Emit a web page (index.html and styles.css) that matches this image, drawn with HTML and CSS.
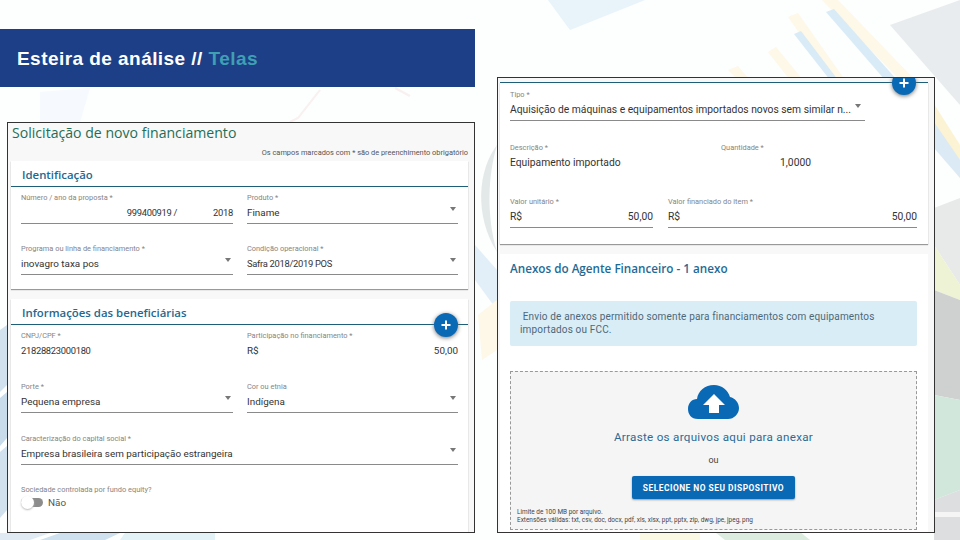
FILE: index.html
```html
<!DOCTYPE html>
<html lang="pt-BR">
<head>
    <meta charset="UTF-8">
    <title>Esteira de análise // Telas</title>
    <link rel="stylesheet" href="styles.css">
</head>
<body>
    <svg class="backdrop" viewBox="0 0 960 540" aria-hidden="true">
        <!-- charts and bands of the slide background -->
        <polygon points="548,0 570,30 645,0" fill="#e9f3fa"/>
        <polygon points="822,0 838,0 915,80 900,80" fill="#fdf8e8"/>
        <polygon points="826,12 834,9 897,80 885,80" fill="#d9ebf6"/>
        <polygon points="788,17 798,13 845,80 832,80" fill="#fdf8e8"/>
        <polygon points="794,34 801,31 838,80 830,80" fill="#d9ebf6"/>
        <polygon points="768,52 776,47 803,80 790,80" fill="#fdf8e8"/>
        <polygon points="728,70 738,66 750,80 738,80" fill="#fdf8e8"/>
        <polygon points="890,25 960,0 960,105" fill="#e9ecee"/>
        <polygon points="934,104 960,145 960,178 934,138" fill="#fbf3d3"/>
        <polygon points="934,122 960,160 960,178 934,148" fill="#dbeaf4"/>
        <polygon points="934,208 960,198 960,285 934,245" fill="#e8eaea"/>
        <polygon points="934,245 960,285 960,300 934,290" fill="#eef3d6"/>
        <polygon points="934,290 960,300 960,400 934,395" fill="#cfd1d1"/>
        <polygon points="934,395 960,400 960,490 934,500" fill="#d2e7db"/>
        <polygon points="934,500 960,490 960,540 934,540" fill="#dcdedf"/>
        <rect x="934" y="512" width="26" height="5" fill="#f5f5f5"/>
        <path d="M497 145 C478 170 474 215 497 252 C486 215 488 175 497 145 Z" fill="#e2e9e8"/>
        <polygon points="475,245 497,270 497,310 475,280" fill="#e3eff8"/>
        <polygon points="478,315 497,300 497,350 482,360" fill="#fdf8e8"/>
        <polygon points="0,330 7,325 7,385 0,392" fill="#d2e1ee"/>
        <polygon points="0,398 7,392 7,438 0,446" fill="#c8dbea"/>
        <polygon points="0,452 7,446 7,510 0,518" fill="#d2e1ee"/>
        <polygon points="0,533 50,533 30,540 0,540" fill="#e0eaf3"/>
        <polygon points="60,533 120,533 105,540 40,540" fill="#cfe0ee"/>
        <polygon points="125,533 215,533 215,540 120,540" fill="#e2f2f6"/>
        <polygon points="640,532 700,532 700,540 640,540" fill="#fbf9e4"/>
        <polygon points="715,532 800,532 810,540 725,540" fill="#dcecdf"/>
        <polygon points="40,92 90,88 80,122 40,122" fill="#f6f9fd"/>
        <path d="M320 90 L298 118 L290 122 M395 88 L410 96" stroke="#f9f0f0" stroke-width="2" fill="none"/>
    </svg>

    <div class="col-left">
        <h1 class="banner">Esteira de análise // <span class="banner-accent">Telas</span></h1>

        <div class="panel panel-left">
            <h2 class="page-title">Solicitação de novo financiamento</h2>
            <p class="required-note">Os campos marcados com * são de preenchimento obrigatório</p>

            <section class="card card-ident">
                <h3 class="card-head">Identificação</h3>
                <div class="form-grid">
                    <div class="field">
                        <label>Número / ano da proposta *</label>
                        <div class="control num"><span class="push-right">999400919 /</span><span class="year">2018</span></div>
                    </div>
                    <div class="field">
                        <label>Produto *</label>
                        <div class="control">Finame<i class="caret"></i></div>
                    </div>
                    <div class="field">
                        <label>Programa ou linha de financiamento *</label>
                        <div class="control">inovagro taxa pos<i class="caret"></i></div>
                    </div>
                    <div class="field">
                        <label>Condição operacional *</label>
                        <div class="control num">Safra 2018/2019 POS<i class="caret"></i></div>
                    </div>
                </div>
            </section>

            <section class="card card-benef">
                <h3 class="card-head">Informações das beneficiárias</h3>
                <button class="fab fab-benef" aria-label="Adicionar">
                    <svg viewBox="0 0 10 10"><path d="M5 0.5V9.5M0.5 5H9.5"/></svg>
                </button>
                <div class="form-grid">
                    <div class="field">
                        <label>CNPJ/CPF *</label>
                        <div class="control no-line num">21828823000180</div>
                    </div>
                    <div class="field">
                        <label>Participação no financiamento *</label>
                        <div class="control no-line">R$<span>50,00</span></div>
                    </div>
                    <div class="field">
                        <label>Porte *</label>
                        <div class="control">Pequena empresa<i class="caret"></i></div>
                    </div>
                    <div class="field">
                        <label>Cor ou etnia</label>
                        <div class="control">Indígena<i class="caret"></i></div>
                    </div>
                    <div class="field field-wide">
                        <label>Caracterização do capital social *</label>
                        <div class="control">Empresa brasileira sem participação estrangeira<i class="caret"></i></div>
                    </div>
                    <div class="field field-wide">
                        <label>Sociedade controlada por fundo equity?</label>
                        <div class="toggle-row"><span class="toggle"><i class="toggle-thumb"></i></span>Não</div>
                    </div>
                </div>
            </section>
        </div>
    </div>

    <div class="panel panel-right">
        <section class="card card-item">
            <button class="fab fab-item" aria-label="Adicionar">
                <svg viewBox="0 0 10 10"><path d="M5 0.5V9.5M0.5 5H9.5"/></svg>
            </button>
            <div class="field tipo">
                <label>Tipo *</label>
                <div class="control">Aquisição de máquinas e equipamentos importados novos sem similar n...<i class="caret"></i></div>
            </div>
            <div class="item-row">
                <div class="field desc">
                    <label>Descrição *</label>
                    <div class="control no-line">Equipamento importado</div>
                </div>
                <div class="field qty">
                    <label>Quantidade *</label>
                    <div class="control no-line qty-value">1,0000</div>
                </div>
            </div>
            <div class="item-row value-row">
                <div class="field unit">
                    <label>Valor unitário *</label>
                    <div class="control">R$<span>50,00</span></div>
                </div>
                <div class="field financed">
                    <label>Valor financiado do item *</label>
                    <div class="control">R$<span>50,00</span></div>
                </div>
            </div>
        </section>

        <section class="card card-attach">
            <h3 class="attach-title">Anexos do Agente Financeiro - 1 anexo</h3>
            <div class="alert">&nbsp;Envio de anexos permitido somente para financiamentos com equipamentos importados ou FCC.</div>
            <div class="dropzone">
                <svg class="cloud" viewBox="0 0 51 34" aria-hidden="true">
                    <path fill="#0a69b5" d="M10 34 C3 34 0 29 0 24 C0 18 4 14 9 14 C10 6 17 0 26 0 C34 0 40 5 42 12 C47 13 51 18 51 23 C51 29 46 34 40 34 Z"/>
                    <path fill="#fff" d="M26 9 L37 20 L31 20 L31 28 L21 28 L21 20 L15 20 Z"/>
                </svg>
                <p class="drop-text">Arraste os arquivos aqui para anexar</p>
                <p class="drop-or">ou</p>
                <button class="select-btn">SELECIONE NO SEU DISPOSITIVO</button>
                <p class="limits">Limite de 100 MB por arquivo.<br>Extensões válidas: txt, csv, doc, docx, pdf, xls, xlsx, ppt, pptx, zip, dwg, jpe, jpeg, png</p>
            </div>
        </section>
    </div>
</body>
</html>
```
FILE: styles.css
```css
* {
    margin: 0;
    padding: 0;
    box-sizing: border-box;
}
body {
    width: 960px;
    height: 540px;
    position: relative;
    display: flex;
    align-items: flex-start;
    overflow: hidden;
    background: #fdfefe;
    font-family: Roboto, "Open Sans", sans-serif;
    color: #333;
}
.backdrop {
    position: absolute;
    top: 0;
    left: 0;
    width: 960px;
    height: 540px;
}
.col-left {
    position: relative;
    width: 475px;
    padding-top: 29px;
}
.banner {
    height: 58px;
    padding-left: 17px;
    background: #1c3f87;
    color: #fff;
    font: bold 19px/59px "Liberation Sans", Arial, sans-serif;
    letter-spacing: 0.45px;
    white-space: pre;
}
.banner-accent {
    color: #3f9fb3;
}
.panel {
    position: relative;
    border: 1px solid #333;
    background: #f8f8f8;
    overflow: hidden;
}
.panel-left {
    margin: 35px 0 0 7px;
    width: 468px;
    height: 411px;
    padding: 0 6px 0 3px;
}
.panel-right {
    margin: 77px 0 0 22px;
    width: 438px;
    height: 456px;
    padding: 0 6px 0 2px;
    display: flex;
    flex-direction: column;
    gap: 10px;
}
.page-title {
    height: 20px;
    padding-left: 1px;
    font-family: "Open Sans", sans-serif;
    font-size: 14.1px;
    font-weight: 400;
    line-height: 20px;
    color: #1f6e57;
    white-space: nowrap;
}
.required-note {
    height: 18px;
    text-align: right;
    font-size: 7.4px;
    line-height: 20px;
    color: #555;
}
.card {
    position: relative;
    background: #fff;
    box-shadow: 0 1px 1px #999;
}
.card-ident {
    height: 128px;
}
.card-benef {
    margin-top: 10px;
    height: 240px;
}
.card-head {
    height: 26px;
    padding: 6px 0 0 11px;
    border-bottom: 1px solid #1d5f78;
    font-family: "Open Sans", sans-serif;
    font-size: 11.4px;
    font-weight: 600;
    line-height: 15px;
    color: #24688f;
    white-space: nowrap;
}
.form-grid {
    display: grid;
    grid-template-columns: 212px 211px;
    column-gap: 14px;
    row-gap: 19.3px;
    padding: 5px 10px 0;
}
.field label {
    display: block;
    height: 12px;
    font-size: 7.4px;
    line-height: 12px;
    color: #858585;
    white-space: nowrap;
}
.control {
    height: 20px;
    padding-bottom: 2px;
    display: flex;
    justify-content: space-between;
    align-items: center;
    border-bottom: 1px solid #8a8a8a;
    font-size: 9.9px;
    color: #333;
    white-space: nowrap;
}
.num {
    font-size: 9.4px;
    letter-spacing: -0.3px;
}
.no-line {
    border-bottom-color: transparent;
}
.push-right {
    margin-left: auto;
}
.year {
    margin-left: 36px;
}
.caret {
    flex: none;
    align-self: flex-start;
    margin: 3px 2px 0 0;
    border-left: 3.5px solid transparent;
    border-right: 3.5px solid transparent;
    border-top: 4px solid #777;
}
.field-wide {
    grid-column: 1 / 3;
}
.toggle-row {
    display: flex;
    align-items: center;
    gap: 5px;
    height: 13px;
    font-size: 9.9px;
    color: #555;
}
.toggle {
    position: relative;
    width: 22px;
    height: 9px;
    border-radius: 5px;
    background: #8c8c8c;
}
.toggle-thumb {
    position: absolute;
    top: -2px;
    left: 0;
    width: 13px;
    height: 13px;
    border-radius: 50%;
    background: #fff;
    box-shadow: 0 1px 2px #bbb;
}
.fab {
    position: absolute;
    width: 24px;
    height: 24px;
    display: flex;
    align-items: center;
    justify-content: center;
    border: none;
    border-radius: 50%;
    background: #0a69b5;
    box-shadow: 0 1px 4px #777;
}
.fab svg {
    width: 10px;
    height: 10px;
    fill: none;
    stroke: #fff;
    stroke-width: 2;
}
.fab-benef {
    top: 14px;
    right: 10px;
}
.fab-item {
    top: -12px;
    right: 12px;
}
.card-item {
    height: 162px;
    flex: none;
    padding: 6px 11px 0 10px;
    border-top: 1px solid #1d5f78;
    margin-top: 4px;
}
.card-item .control {
    font-size: 10.3px;
}
.tipo {
    width: 355px;
}
.tipo .caret {
    margin-right: 4px;
}
.item-row {
    display: flex;
    margin-top: 21px;
}
.value-row {
    margin-top: 22px;
    justify-content: space-between;
}
.desc {
    width: 211px;
}
.qty {
    width: 90px;
}
.qty-value {
    justify-content: flex-end;
}
.unit {
    width: 143px;
}
.financed {
    width: 249px;
}
.card-attach {
    flex: 1;
    padding: 0 11px 0 10px;
    box-shadow: none;
}
.attach-title {
    height: 47px;
    padding-top: 6px;
    font-family: "Open Sans", sans-serif;
    font-size: 11.7px;
    font-weight: 600;
    color: #1e6a94;
    white-space: nowrap;
}
.alert {
    height: 45px;
    padding: 10px 10px 0;
    border-radius: 2px;
    background: #d9edf7;
    font-size: 10px;
    line-height: 12.5px;
    letter-spacing: 0.16px;
    color: #4d6878;
}
.dropzone {
    height: 159px;
    margin-top: 25px;
    padding-top: 13px;
    display: flex;
    flex-direction: column;
    align-items: center;
    border: 1px dashed #999;
    background: #f5f5f5;
}
.cloud {
    flex: none;
    width: 51px;
    height: 34px;
}
.drop-text {
    margin-top: 12px;
    font-size: 11.6px;
    line-height: 13px;
    letter-spacing: 0.3px;
    color: #2b6a94;
}
.drop-or {
    margin-top: 10px;
    font-size: 9px;
    line-height: 13px;
    color: #444;
}
.select-btn {
    width: 163px;
    height: 23px;
    margin-top: 9px;
    border: none;
    border-radius: 2px;
    background: #0a69b5;
    color: #fff;
    font: bold 8.4px Roboto, sans-serif;
    letter-spacing: 0.5px;
    box-shadow: 0 1px 2px #999;
}
.limits {
    align-self: flex-start;
    margin: 9px 0 0 6px;
    font-size: 6.45px;
    line-height: 8px;
    color: #444;
    white-space: nowrap;
}
```
